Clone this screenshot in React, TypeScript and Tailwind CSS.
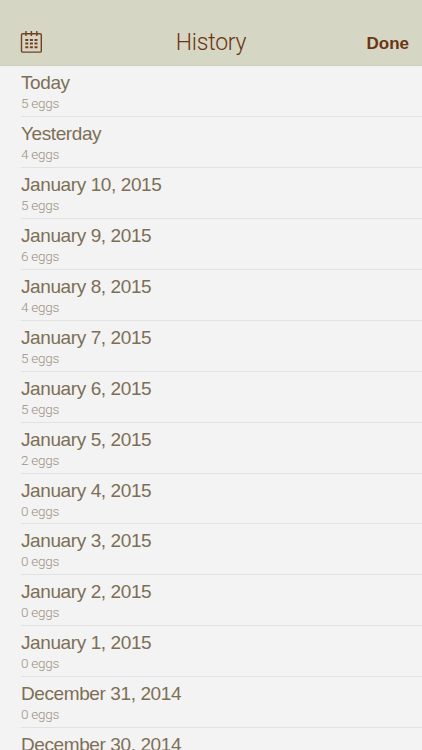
import React from 'react';

interface HistoryEntry {
  label: string;
  eggs: number;
}

const ENTRIES: HistoryEntry[] = [
  { label: 'Today', eggs: 5 },
  { label: 'Yesterday', eggs: 4 },
  { label: 'January 10, 2015', eggs: 5 },
  { label: 'January 9, 2015', eggs: 6 },
  { label: 'January 8, 2015', eggs: 4 },
  { label: 'January 7, 2015', eggs: 5 },
  { label: 'January 6, 2015', eggs: 5 },
  { label: 'January 5, 2015', eggs: 2 },
  { label: 'January 4, 2015', eggs: 0 },
  { label: 'January 3, 2015', eggs: 0 },
  { label: 'January 2, 2015', eggs: 0 },
  { label: 'January 1, 2015', eggs: 0 },
  { label: 'December 31, 2014', eggs: 0 },
  { label: 'December 30, 2014', eggs: 0 },
];

function CalendarIcon() {
  return (
    <svg className="h-6 w-6" viewBox="0 0 24 24" fill="none" stroke="#75401f" strokeWidth="1.4">
      <rect x="2.5" y="3.7" width="19.8" height="18.4" rx="1.2" />
      <path d="M7 1v5M12.4 1v5M17.8 1v5" />
      <path d="M6.3 10h3M10.9 10h3M15.5 10h3M6.3 13.6h3M10.9 13.6h3M15.5 13.6h3M6.3 17.2h3M10.9 17.2h3M15.5 17.2h3" strokeWidth="2" />
    </svg>
  );
}

function HistoryRow({ entry }: { entry: HistoryEntry }) {
  return (
    <li className="ml-[21px] h-[50.94px] border-b border-[#e2e2e2] pt-1.5">
      <div className="font-['Liberation_Sans',sans-serif] text-[19px] leading-[22px] tracking-[-0.4px] text-[#7d6f56]">{entry.label}</div>
      <div className="font-[Roboto,sans-serif] text-[13.5px] leading-[18px] font-light tracking-[-0.25px] text-[#9c917f]">{entry.eggs} eggs</div>
    </li>
  );
}

export default function App() {
  return (
    <div className="flex h-[750px] w-full flex-col overflow-hidden bg-[#f3f3f3]">
      <header className="grid h-[66px] shrink-0 grid-cols-3 items-end border-b border-[#cdcdc0] bg-[#d6d6c5] pr-[13px] pb-[11px] pl-[19px] text-[#6b3413]">
        <button>
          <CalendarIcon />
        </button>
        <h1 className="-ml-1.5 text-center font-[Roboto,sans-serif] text-[23px] leading-[22px] font-light tracking-[-0.2px]">History</h1>
        <button className="text-right font-['Liberation_Sans',sans-serif] text-[17px] leading-5 font-bold">Done</button>
      </header>

      <ul>
        {ENTRIES.map((entry) => (
          <HistoryRow key={entry.label} entry={entry} />
        ))}
      </ul>
    </div>
  );
}
